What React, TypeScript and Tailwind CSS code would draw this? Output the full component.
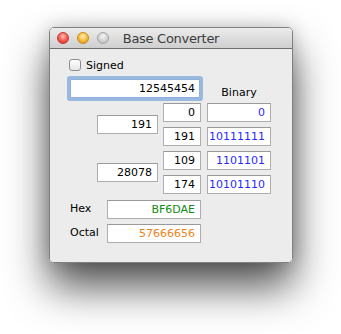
import React from "react";

const font = { fontFamily: '"DejaVu Sans", "Lucida Grande", sans-serif' };

function Field({
  value,
  width,
  color = "text-black",
}: {
  value: string;
  width: string;
  color?: string;
}) {
  return (
    <div
      className={`${width} h-[19px] bg-white border border-[#adadad] border-t-[#9a9a9a] pr-[5px] text-right text-[11px] leading-[17px] ${color}`}
    >
      {value}
    </div>
  );
}

function BytePair({
  word,
  bytes,
}: {
  word: string;
  bytes: { dec: string; bin: string }[];
}) {
  return (
    <div className="flex items-center">
      <Field value={word} width="w-[61px]" />
      <div className="ml-[5px] flex flex-col gap-[5px]">
        {bytes.map((b, i) => (
          <Field key={i} value={b.dec} width="w-[38px]" />
        ))}
      </div>
      <div className="ml-[6px] flex flex-col gap-[5px]">
        {bytes.map((b, i) => (
          <Field key={i} value={b.bin} width="w-[64px]" color="text-[#2a2aff]" />
        ))}
      </div>
    </div>
  );
}

export default function App() {
  return (
    <div className="min-h-screen bg-white pl-[49px] pt-[27px]" style={font}>
      <div className="w-[244px] rounded-[5px] border border-[#808080] shadow-[0_24px_42px_rgba(0,0,0,0.68),0_0_18px_rgba(0,0,0,0.18)] overflow-hidden">
        {/* Title bar */}
        <div className="relative h-[21px] flex items-center justify-center border-b border-[#6e6e6e] bg-gradient-to-b from-[#ececec] to-[#cfcfcf]">
          <div className="absolute left-[7px] top-[4px] flex gap-[8px]">
            <span className="block w-[12px] h-[12px] rounded-full border border-[#c33a33] bg-[radial-gradient(circle_at_50%_35%,#ffc2bd,#f2544c_55%,#c8271f)]" />
            <span className="block w-[12px] h-[12px] rounded-full border border-[#c98a1c] bg-[radial-gradient(circle_at_50%_35%,#fff0b8,#f6b838_55%,#d18a10)]" />
            <span className="block w-[12px] h-[12px] rounded-full border border-[#a3a3a3] bg-[radial-gradient(circle_at_50%_35%,#f4f4f4,#d2d2d2_55%,#b4b4b4)]" />
          </div>
          <span className="text-[13px] tracking-[-0.3px] text-[#3c3c3c] leading-none">
            Base Converter
          </span>
        </div>

        {/* Body */}
        <div className="h-[213px] bg-[#ececec] pl-[19px] pt-[10px]">
          <div className="flex items-center h-[12px]">
            <span className="block w-[12px] h-[12px] rounded-[3px] border border-[#8c8c8c] bg-gradient-to-b from-white to-[#e6e6e6]" />
            <span className="ml-[5px] text-[11px] text-black leading-none">Signed</span>
          </div>

          <div className="mt-[8px] ml-[1px] flex items-end">
            <div className="w-[130px] h-[19px] bg-white border border-[#8fb0d8] rounded-[1px] ring-[3px] ring-[#7ea8de]/75 pr-[4px] text-right text-[11px] leading-[17px] text-black">
              12545454
            </div>
            <div className="ml-[7px] w-[64px] text-center text-[11px] leading-[13px] text-black translate-y-[1px]">
              Binary
            </div>
          </div>

          <div className="mt-[5px] ml-[28px] flex flex-col gap-[5px]">
            <BytePair
              word="191"
              bytes={[
                { dec: "0", bin: "0" },
                { dec: "191", bin: "10111111" },
              ]}
            />
            <BytePair
              word="28078"
              bytes={[
                { dec: "109", bin: "1101101" },
                { dec: "174", bin: "10101110" },
              ]}
            />
          </div>

          <div className="mt-[6px] ml-[1px] flex items-center">
            <span className="w-[37px] text-[11px] text-black">Hex</span>
            <Field value="BF6DAE" width="w-[94px]" color="text-[#168a16]" />
          </div>
          <div className="mt-[5px] ml-[1px] flex items-center">
            <span className="w-[37px] text-[11px] text-black">Octal</span>
            <Field value="57666656" width="w-[94px]" color="text-[#ea8418]" />
          </div>
        </div>
      </div>
    </div>
  );
}
